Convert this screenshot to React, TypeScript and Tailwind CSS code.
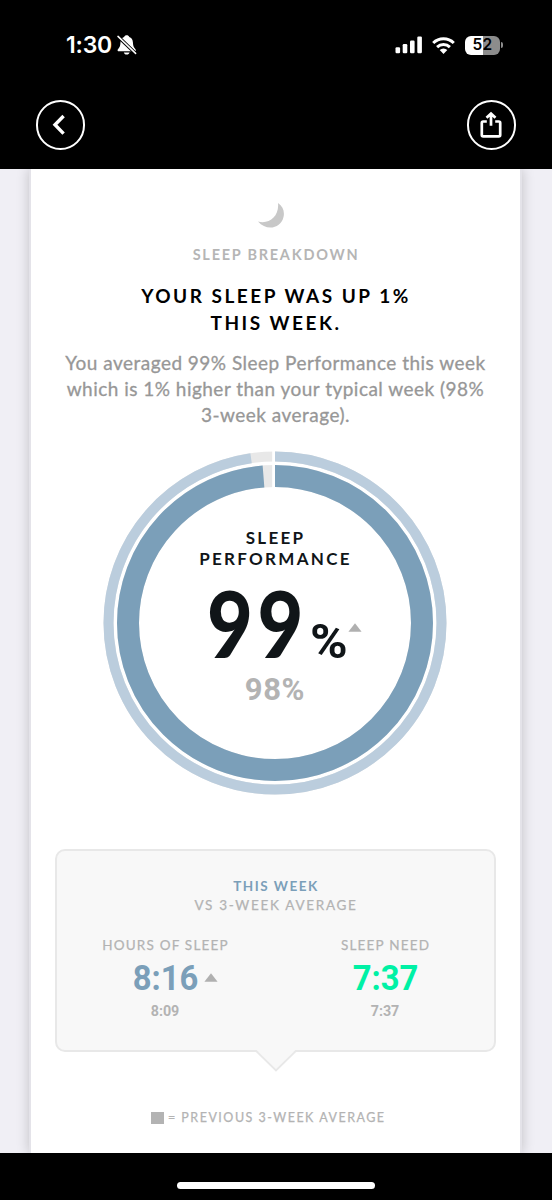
import type { ReactNode } from "react";

const RING_CENTER = 172;

interface RingProps {
  radius: number;
  width: number;
  color: string;
  percent: number;
}

function Ring({ radius, width, color, percent }: RingProps) {
  return (
    <g transform={`rotate(-90 ${RING_CENTER} ${RING_CENTER})`} fill="none" strokeWidth={width}>
      <circle cx={RING_CENTER} cy={RING_CENTER} r={radius} stroke="#e8e8e8" />
      <circle
        cx={RING_CENTER}
        cy={RING_CENTER}
        r={radius}
        stroke={color}
        pathLength={100}
        strokeDasharray={`${percent} ${100 - percent}`}
      />
    </g>
  );
}

function UpArrow({ className = "" }: { className?: string }) {
  return (
    <svg className={className} width="14" height="9" viewBox="0 0 14 9">
      <path d="M7 0.3 13.6 8.7H0.4Z" fill="#b0b0b0" />
    </svg>
  );
}

function StatusBar() {
  return (
    <div className="flex h-[90px] items-start justify-between pl-[66px] pr-[49px] pt-[33px] text-white">
      <div className="flex h-6 items-center gap-[5px]">
        <span className="font-['Inter',sans-serif] text-[23px] leading-6 font-semibold tracking-[-0.2px]">1:30</span>
        <svg width="20" height="20" viewBox="0 0 20 20">
          <path
            d="M2.2 16.300c-1.900 0-2.100-1.400-1-2.400C2.900 12.300 3.300 10.500 3.500 7.300 3.700 4.500 5 2.600 7.100 2 7.500.8 8.500.2 9.700.2s2.200.6 2.600 1.800c2.100.6 3.400 2.500 3.600 5.300.2 3.200.6 5 2.300 6.600 1.100 1 .9 2.400-1 2.400ZM6.800 17.500h5.800c-.3 1.300-1.400 2.100-2.900 2.100S7.100 18.800 6.800 17.500Z"
            fill="currentColor"
          />
          <path d="M0.500 1 19 18.800" stroke="black" strokeWidth="3.400" />
          <path d="M1 1.400 18.600 18.400" stroke="currentColor" strokeWidth="1.500" strokeLinecap="round" />
        </svg>
      </div>

      <div className="flex h-6 items-center">
        <svg width="28" height="18" viewBox="0 0 28 18" fill="currentColor">
          <rect x="0.500" y="11.200" width="4.600" height="6" rx="1.200" />
          <rect x="7.700" y="8" width="4.600" height="9.200" rx="1.200" />
          <rect x="15" y="4.500" width="4.600" height="12.700" rx="1.200" />
          <rect x="22.300" y="0.600" width="4.600" height="16.600" rx="1.200" />
        </svg>
        <svg className="ml-[9px]" width="23" height="17" viewBox="0 0 23 17">
          <g fill="none" stroke="currentColor" strokeWidth="3">
            <path d="M1.200 6a14.700 14.700 0 0 1 20.600 0" />
            <path d="M5.100 10.200a9.200 9.200 0 0 1 12.800 0" />
          </g>
          <path d="M7.700 13.100a5.500 5.500 0 0 1 7.600 0L11.500 16.900Z" fill="currentColor" />
        </svg>
        <div className="ml-[10px] flex h-[19px] w-[35px] items-center justify-center rounded-[6px] bg-[linear-gradient(to_right,#fff_52%,#8c8c8c_52%)] font-['Inter',sans-serif] text-[15.5px] font-semibold tracking-[0.2px] text-black">
          52
        </div>
        <div className="ml-[1px] h-[6px] w-[2px] rounded-r-full bg-[#8c8c8c]" />
      </div>
    </div>
  );
}

function RoundButton({ label, children }: { label: string; children: ReactNode }) {
  return (
    <button
      aria-label={label}
      className="flex size-[49.5px] items-center justify-center rounded-full border-[2.5px] border-white text-white"
    >
      {children}
    </button>
  );
}

function PerformanceDial() {
  return (
    <div className="relative mt-[23px] mr-px h-[344px] w-[344px] shrink-0">
      <svg width="344" height="344" viewBox="0 0 344 344">
        <Ring radius={166.5} width={10} color="#bbcddd" percent={97.7} />
        <Ring radius={147} width={22} color="#7b9fb9" percent={98.75} />
        <rect x="169.200" y="0" width="2.800" height="40" fill="white" />
      </svg>
      <div className="absolute inset-0 flex flex-col items-center pt-[76px] text-[#101518]">
        <p className="pl-px text-center text-[17px] leading-[21px] font-bold tracking-[2.3px]">
          SLEEP
          <br />
          PERFORMANCE
        </p>
        <div className="mt-[19px] flex h-[78px] items-baseline pl-[19px]">
          <span className="inline-block w-[101px] origin-left scale-x-[0.86] text-[92px] leading-[70px] font-black tracking-[5.5px]">99</span>
          <span className="ml-[2px] inline-block w-[38px] origin-left scale-x-[1.04] font-['Roboto',sans-serif] text-[49px] leading-[49px] font-bold">%</span>
          <UpArrow className="-translate-y-[26px]" />
        </div>
        <p className="mt-[7px] font-['Roboto',sans-serif] text-[31px] leading-[34px] font-bold tracking-[0.6px] text-[#b3b3b3]">98%</p>
      </div>
    </div>
  );
}

interface StatProps {
  label: string;
  value: string;
  previous: string;
  valueClass: string;
  up?: boolean;
}

function Stat({ label, value, previous, valueClass, up }: StatProps) {
  return (
    <div className="flex w-[220px] flex-col items-center">
      <p className="pl-px text-[13.5px] leading-[18px] tracking-[1.2px] text-[#b3b3b3] [-webkit-text-stroke:0.25px_#b3b3b3]">{label}</p>
      <div className="relative mt-[5px] ml-px">
        <p className={`scale-x-95 font-['Roboto',sans-serif] text-[34.5px] leading-[38px] font-bold ${valueClass}`}>{value}</p>
        {up && <UpArrow className="absolute top-[14px] left-full ml-[4px]" />}
      </div>
      <p className="mt-[5px] scale-x-95 font-['Roboto',sans-serif] text-[15px] leading-[18px] font-bold text-[#b3b3b3]">{previous}</p>
    </div>
  );
}

export default function App() {
  return (
    <div className="flex h-[1200px] w-[552px] flex-col overflow-hidden bg-black font-['Lato',sans-serif]">
      <header className="h-[169px] shrink-0">
        <StatusBar />
        <div className="mt-[10px] flex justify-between pr-[36px] pl-[35.5px]">
          <RoundButton label="Back">
            <svg className="mr-[3px]" width="14" height="22" viewBox="0 0 14 22">
              <path d="M11.600 2 3 10.800 11.600 19.600" fill="none" stroke="currentColor" strokeWidth="3.400" />
            </svg>
          </RoundButton>
          <RoundButton label="Share">
            <svg width="22" height="28" viewBox="0 0 22 28" fill="none" stroke="currentColor" strokeWidth="2.700">
              <path d="M6.800 10.500H3.200a1.400 1.400 0 0 0-1.400 1.400v12a1.400 1.400 0 0 0 1.400 1.400h15.600a1.400 1.400 0 0 0 1.400-1.400v-12a1.400 1.400 0 0 0-1.400-1.400h-3.600" />
              <path d="M11 14.800V3M6.500 6.800 11 2.700l4.500 4.100" />
            </svg>
          </RoundButton>
        </div>
      </header>

      <main className="flex h-[984px] shrink-0 justify-center overflow-hidden bg-[#f0eff5] pr-px">
        <section className="flex w-[493px] flex-col items-center border-x-2 border-[#e4e3e9] bg-white shadow-[0_0_12px_rgba(0,0,0,0.2)]">
          <svg className="mt-[34px] mr-[9px]" width="28" height="27" viewBox="0 0 28 27">
            <path d="M21 0C26 3.500 27.800 8.500 26.500 14 24 25.500 9.500 28.500 1 18.500 12 21.500 22.500 13.500 21 0Z" fill="#c8c8c8" />
          </svg>
          <h2 className="mt-[15px] pl-px text-[14.5px] leading-[20px] font-bold tracking-[1.75px] text-[#b5b5b5]">SLEEP BREAKDOWN</h2>
          <h1 className="mt-[17px] pl-px text-center text-[19px] leading-[27px] font-bold tracking-[2.5px] text-black">
            YOUR SLEEP WAS UP 1%
            <br />
            THIS WEEK.
          </h1>
          <p className="mt-[14px] text-center text-[19px] leading-[26px] tracking-[0.48px] text-[#979797] [-webkit-text-stroke:0.3px_#979797]">
            You averaged 99% Sleep Performance this week
            <br />
            which is 1% higher than your typical week (98%
            <br />
            3-week average).
          </p>

          <PerformanceDial />

          <div className="mt-[54px] mr-px flex h-[203px] w-[441px] shrink-0 flex-col items-center rounded-[10px] border-2 border-[#e8e8e8] bg-[#f8f8f8] pt-[26px]">
            <p className="pl-[2px] text-[13.5px] leading-[18px] font-bold tracking-[1.5px] text-[#7b9fb9]">THIS WEEK</p>
            <p className="mt-px pl-[2px] text-[13.5px] leading-[18px] tracking-[1.7px] text-[#b3b3b3] [-webkit-text-stroke:0.25px_#b3b3b3]">VS 3-WEEK AVERAGE</p>
            <div className="mt-[22px] flex">
              <Stat label="HOURS OF SLEEP" value="8:16" previous="8:09" valueClass="text-[#7b9fb9]" up />
              <Stat label="SLEEP NEED" value="7:37" previous="7:37" valueClass="text-[#00f1a5]" />
            </div>
          </div>
          <svg className="relative -mt-[2px] shrink-0" width="42" height="22" viewBox="0 0 42 22">
            <path d="M1.500 0 21 20.500 40.500 0Z" fill="#f8f8f8" />
            <path d="M1 0.800 21 20.500 41 0.800" fill="none" stroke="#e8e8e8" strokeWidth="1.800" />
          </svg>

          <div className="mt-[37px] mr-[14px] flex items-center text-[#b3b3b3]">
            <span className="size-[12.5px] bg-[#b3b3b3]" />
            <span className="ml-[4px] text-[12.5px] leading-[18px] tracking-[1.5px] [-webkit-text-stroke:0.25px_#b3b3b3]">
              = PREVIOUS 3-WEEK AVERAGE
            </span>
          </div>
        </section>
      </main>

      <footer className="flex flex-1 justify-center pt-[29px]">
        <div className="h-[7px] w-[198px] rounded-full bg-white" />
      </footer>
    </div>
  );
}
